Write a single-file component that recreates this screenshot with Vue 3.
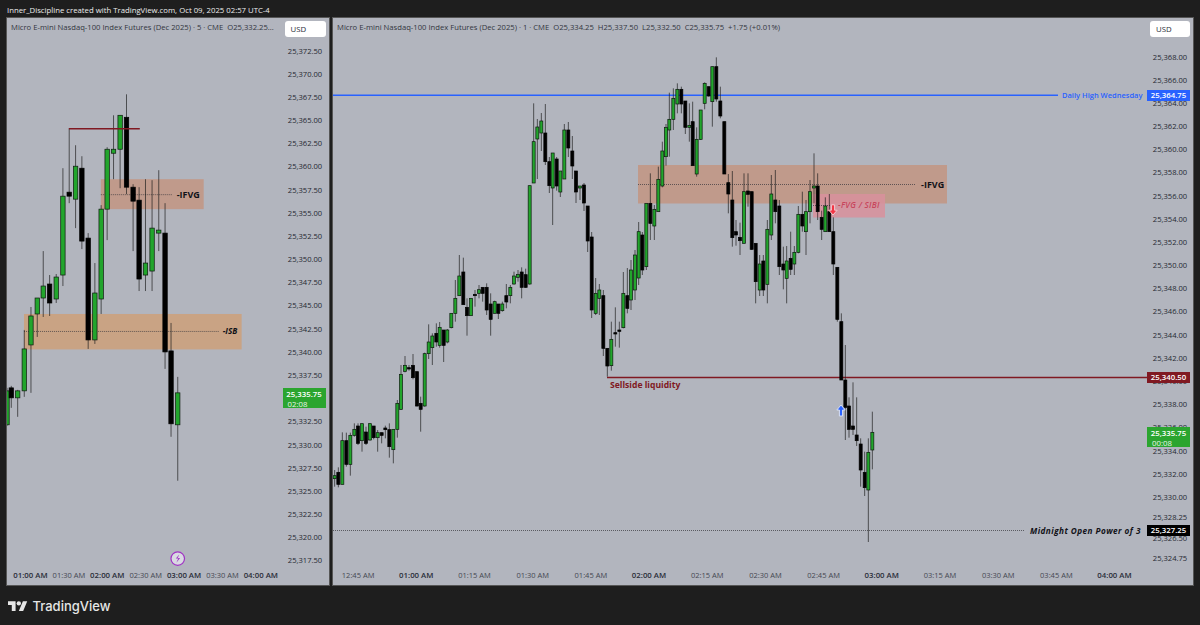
<template>
  <div class="page">
    <div class="byline">Inner_Discipline created with TradingView.com, Oct 09, 2025 02:57 UTC-4</div>

    <div class="charts">
      <!-- 5 minute chart -->
      <section class="panel panel-5m">
        <svg class="plot" viewBox="7 18 322 567" aria-hidden="true">
          <rect class="zone zone-ifvg" x="101" y="179" width="103" height="30" />
          <rect class="zone zone-isb" x="24" y="314" width="218" height="35.5" />
          <line class="dotted" x1="101" y1="194.5" x2="173" y2="194.5" />
          <line class="dotted" x1="24" y1="331.5" x2="220" y2="331.5" />
          <g v-for="(c, i) in candles5m" :key="i">
            <line class="wick" :x1="c.x" :x2="c.x" :y1="c.wt" :y2="c.wb" />
            <rect :class="c.up ? 'up' : 'down'" :x="c.x - 2.2" :y="c.bt" width="4.4" :height="c.bb - c.bt" />
          </g>
          <line class="level-red" x1="69" y1="128.5" x2="140" y2="128.5" />
          <text class="note bold big" x="177" y="197.5">-IFVG</text>
          <text class="note bold italic" x="223" y="334.5">-ISB</text>
          <circle cx="178" cy="559" r="6.8" fill="#d9dae2" stroke="#a032c4" stroke-width="1.2" />
          <path d="M179.5 554.8l-3.4 4.2h2.4l-1.9 4.2 3.8-4.9h-2.4z" fill="#a032c4" />
        </svg>

        <div class="legend">Micro E-mini Nasdaq-100 Index Futures (Dec 2025) · 5 · CME&nbsp; O25,332.25...</div>
        <div class="usd"><span>USD</span></div>
        <div class="prices prices-5m">
          <span v-for="p in prices5m" :key="p">{{ p }}</span>
        </div>
        <div class="times times-5m">
          <span v-for="t in times5m" :key="t.label" :class="{ major: t.major }">{{ t.label }}</span>
        </div>

        <div class="tag tag-live tag-live-5m"><b>25,335.75</b><span>02:08</span></div>
      </section>

      <!-- 1 minute chart -->
      <section class="panel panel-1m">
        <svg class="plot" viewBox="333 18 860 567" aria-hidden="true">
          <rect class="zone zone-ifvg" x="638" y="165" width="309" height="38.5" />
          <rect class="zone zone-fvg" x="813" y="194" width="72" height="23.5" />
          <line class="dotted" x1="638" y1="184.5" x2="916" y2="184.5" />
          <line class="dotted" x1="813" y1="205.5" x2="835" y2="205.5" />
          <line class="dotted" x1="333" y1="530.5" x2="1025" y2="530.5" />
          <line class="level-blue" x1="333" y1="95.3" x2="1058" y2="95.3" />
          <line class="level-red" x1="607" y1="377.5" x2="1147" y2="377.5" />
          <g v-for="(c, i) in candles1m" :key="i">
            <line class="wick" :x1="c.x" :x2="c.x" :y1="c.wt" :y2="c.wb" />
            <rect :class="c.up ? 'up' : 'down'" :x="c.x - 1.5" :y="c.bt" width="3" :height="c.bb - c.bt" />
          </g>
          <text class="note bold big" x="921" y="187.5">-IFVG</text>
          <text class="note italic fvg" x="838" y="208">-FVG / SIBI</text>
          <text class="note blue" x="1062" y="98">Daily High Wednesday</text>
          <text class="note red bold" x="610" y="387.5">Sellside liquidity</text>
          <text class="note bold italic wide" x="1030" y="534">Midnight Open Power of 3</text>
          <path d="M833 215l-4.2-4.8h2.6v-5.4h3.2v5.4h2.6z" fill="#f23645" stroke="#f3c9cf" stroke-width="1" />
          <path d="M841 405l4.2 5h-2.6v6h-3.2v-6h-2.6z" fill="#2962ff" stroke="#d8e0f5" stroke-width="1" />
        </svg>

        <div class="legend">Micro E-mini Nasdaq-100 Index Futures (Dec 2025) · 1 · CME&nbsp; O25,334.25&nbsp; H25,337.50&nbsp; L25,332.50&nbsp; C25,335.75&nbsp; +1.75 (+0.01%)</div>
        <div class="usd"><span>USD</span></div>
        <div class="prices prices-1m">
          <span v-for="p in prices1m" :key="p.label" :class="p.cls">{{ p.label }}</span>
        </div>
        <div class="times times-1m">
          <span v-for="t in times1m" :key="t.label" :class="{ major: t.major }">{{ t.label }}</span>
        </div>

        <div
          v-for="t in tags1m"
          :key="t.label"
          class="tag"
          :style="{ top: t.top + 'px', background: t.bg }"
        ><b>{{ t.label }}</b></div>
        <div class="tag tag-live tag-live-1m"><b>25,335.75</b><span>00:08</span></div>
      </section>
    </div>

    <div class="brand">
      <svg class="brand-logo" viewBox="0 0 36 18" aria-hidden="true">
        <path d="M14 18H7V7H0V0h14v18zM28 18h-8l7.5-18h8L28 18z" />
        <circle cx="20" cy="4" r="4" />
      </svg>
      <span>TradingView</span>
    </div>
  </div>
</template>

<script setup>
// x, body top, body bottom, wick top, wick bottom, up  (page pixels)
const raw5m = [
  [7, 391, 425, 388, 426, 1], [11.3, 388, 398, 386, 408, 0], [17.7, 391, 398, 390, 417, 1],
  [24.3, 349, 391, 330, 397, 1], [31, 316, 345, 307, 393, 1], [37.3, 298, 314, 298, 337, 1],
  [43.3, 286, 298, 251, 317, 1], [49.7, 284, 303, 275, 316, 0], [56.3, 277, 299, 274, 303, 1],
  [63, 196, 275, 168, 286, 1], [69.3, 192, 196, 128, 203, 0], [75.7, 166, 199, 145, 228, 1],
  [82, 168, 241, 156, 249, 0], [88.3, 238, 340, 233, 349, 0], [95, 293, 340, 263, 344, 1],
  [101.3, 209, 299, 205, 314, 1], [107.3, 149, 209, 147, 240, 1], [113.7, 149, 153, 115, 179, 1],
  [120.3, 115, 149, 115, 188, 1], [126.7, 117, 187, 94, 194, 0], [133.3, 187, 201, 184, 251, 0],
  [139.3, 200, 279, 187, 291, 0], [145.7, 263, 275, 179, 291, 1], [152.3, 228, 271, 180, 291, 1],
  [159, 230, 233, 170, 251, 1], [165.3, 233, 352, 203, 369, 0], [171.3, 351, 424, 323, 437, 0],
  [178, 393, 425, 377, 481, 1],
]

const toCandle = ([x, bt, bb, wt, wb, up]) => ({ x, bt, bb, wt, wb, up })
const candles5m = raw5m.map(toCandle)

// 1m candles were read off a 3x crop, so they go through a small transform
const fromCrop = (ox, oy, rows) =>
  rows.map(([zx, bt, bb, wt, wb, up]) => ({
    x: ox + zx / 3,
    bt: oy + bt / 3,
    bb: oy + bb / 3,
    wt: oy + wt / 3,
    wb: oy + wb / 3,
    up,
  }))

const candles1m = [
  ...fromCrop(330, 280, [
    [14, 587, 596, 570, 620, 1], [25, 577, 613, 562, 622, 0], [37, 482, 613, 457, 613, 1],
    [49, 482, 553, 458, 560, 0], [61, 466, 553, 458, 587, 1], [73, 448, 466, 430, 470, 1],
    [84, 438, 490, 430, 495, 0], [96, 431, 482, 431, 515, 1], [108, 456, 490, 440, 495, 0],
    [120, 431, 480, 430, 482, 1], [131, 438, 473, 438, 478, 0], [143, 458, 473, 450, 515, 1],
    [155, 458, 466, 458, 490, 0], [166, 444, 449, 437, 475, 0], [178, 449, 500, 430, 533, 0],
    [190, 448, 509, 448, 550, 1], [202, 370, 448, 360, 473, 1], [213, 283, 388, 255, 390, 1],
    [225, 256, 274, 228, 277, 1], [237, 263, 267, 255, 272, 0], [249, 256, 293, 222, 298, 0],
    [261, 275, 378, 275, 380, 0], [272, 370, 388, 350, 455, 0], [284, 221, 378, 218, 380, 1],
    [296, 186, 221, 133, 237, 1], [307, 168, 203, 160, 255, 1], [319, 160, 186, 130, 200, 0],
    [329, 142, 196, 126, 203, 1], [341, 150, 196, 150, 246, 0], [352, 150, 186, 147, 190, 1],
    [364, 100, 143, 100, 145, 1], [376, 55, 100, 0, 125, 1], [388, -12, 47, -75, 47, 1],
    [400, -24, 74, -67, 74, 0], [411, 82, 107, 55, 167, 0], [423, 55, 107, 55, 107, 1],
    [435, 43, 47, 30, 80, 0], [447, 29, 40, 15, 55, 1], [458, 22, 40, 22, 65, 0],
    [470, 22, 90, 10, 105, 0], [482, 72, 118, 40, 167, 0], [494, 65, 100, 62, 100, 1],
    [505, 72, 100, 72, 117, 0], [517, 72, 92, 65, 95, 1], [529, 47, 66, 12, 85, 0],
    [541, 22, 47, 15, 70, 1], [552, -12, 12, -25, 14, 1], [564, -17, -8, -30, 5, 1],
    [575, -24, 22, -38, 55, 0], [587, -16, 22, -34, 24, 0], [599, -283, 12, -283, 14, 1],
    [611, -415, -291, -530, -291, 1], [622, -459, -423, -483, -303, 1], [634, -477, -441, -501, -387, 1],
    [646, -441, -355, -528, -345, 0], [658, -355, -283, -369, -261, 0], [668, -381, -276, -381, -165, 1],
    [680, -363, -282, -369, -268, 0], [691, -327, -264, -327, -249, 1], [703, -450, -303, -468, -303, 1],
    [715, -450, -396, -474, -369, 0], [727, -387, -342, -432, -303, 0], [738, -327, -264, -327, -231, 0],
    [750, -282, -276, -282, -240, 1], [762, -285, -231, -291, -207, 0], [773, -222, -117, -222, -84, 0],
    [785, -129, 90, -144, 114, 0], [797, 40, 100, -6, 105, 1], [808, 30, 55, 12, 105, 1],
    [820, 47, 205, 30, 228, 0], [832, 205, 258, 205, 290, 0], [844, 178, 257, 125, 272, 1],
    [856, 158, 162, 82, 200, 0], [868, 150, 154, 125, 203, 0], [880, 40, 143, -24, 145, 1],
    [892, 47, 85, -36, 100, 0],
  ]),
  ...fromCrop(630, 50, [
    [3, 660, 750, 630, 780, 1], [15, 615, 720, 600, 750, 1], [26, 545, 684, 516, 705, 1],
    [37, 555, 660, 546, 675, 0], [49, 460, 650, 460, 660, 1], [61, 460, 520, 370, 570, 0],
    [73, 478, 528, 465, 570, 1], [85, 388, 485, 350, 485, 1], [97, 303, 408, 275, 412, 1],
    [108, 232, 320, 222, 347, 1], [118, 208, 240, 128, 320, 1], [130, 145, 208, 115, 240, 1],
    [142, 118, 162, 100, 190, 1], [154, 118, 162, 110, 190, 0], [166, 153, 232, 153, 252, 0],
    [178, 226, 232, 160, 275, 1], [188, 215, 347, 155, 347, 0], [200, 268, 372, 232, 380, 1],
    [212, 180, 268, 180, 270, 1], [224, 100, 160, 97, 178, 1], [236, 110, 138, 110, 140, 0],
    [247, 50, 155, 50, 230, 1], [259, 50, 147, 22, 155, 0], [271, 153, 198, 110, 205, 0],
    [283, 215, 372, 215, 372, 0], [295, 398, 432, 372, 490, 0], [307, 450, 563, 363, 590, 0],
  ]),
  ...fromCrop(720, 190, [
    [48, 125, 135, 90, 167, 0], [60, 142, 152, 98, 195, 0], [72, 5, 160, -50, 160, 1],
    [84, 3, 13, -50, 50, 0], [95, 5, 178, 5, 180, 0], [107, 160, 275, 160, 340, 0],
    [119, 222, 300, 195, 318, 1], [130, 213, 300, 195, 318, 0], [142, 118, 283, 90, 340, 1],
    [154, 12, 135, -45, 150, 1], [166, 30, 65, -60, 100, 0], [178, 48, 230, 30, 255, 0],
    [190, 222, 240, 170, 298, 0], [200, 213, 265, 168, 340, 1], [212, 205, 238, 125, 255, 0],
    [223, 187, 222, 168, 255, 1], [235, 73, 187, 48, 190, 1], [247, 73, 108, 5, 125, 0],
    [258, 65, 125, 30, 195, 1], [270, 5, 65, -30, 100, 1], [282, -12, -6, -110, 40, 1],
    [293, -12, 65, -50, 90, 0], [305, 82, 118, 62, 150, 0], [316, 48, 125, 22, 125, 1],
    [328, 65, 125, 12, 125, 0], [340, 125, 222, 82, 255, 0], [352, 232, 388, 232, 395, 0],
    [364, 395, 570, 370, 570, 0],
  ]),
  ...fromCrop(800, 370, [
    [136, 30, 112, -75, 210, 0], [147, 108, 178, 82, 203, 0], [159, 168, 178, 37, 195, 0],
    [170, 195, 212, 82, 228, 0], [182, 222, 300, 205, 350, 0], [194, 307, 353, 245, 378, 0],
    [205, 247, 360, 205, 516, 1], [217, 187, 240, 125, 298, 1],
  ]),
]

const label = (n) => n.toLocaleString('en-US', { minimumFractionDigits: 2 })

const prices5m = Array.from({ length: 23 }, (_, i) => label(25372.5 - i * 2.5))

const prices1m = [
  ...Array.from({ length: 20 }, (_, i) => ({ label: label(25368 - i * 2), cls: '' })),
  { label: '25,328.25', cls: 'tight first-tight' },
  { label: '25,326.50', cls: 'tight' },
  { label: '25,324.75', cls: 'tight' },
]

const times = (list) => list.map((t) => ({ label: t + ' AM', major: t.endsWith(':00') }))
const times5m = times(['01:00', '01:30', '02:00', '02:30', '03:00', '03:30', '04:00'])
const times1m = times([
  '12:45', '01:00', '01:15', '01:30', '01:45', '02:00', '02:15',
  '02:30', '02:45', '03:00', '03:15', '03:30', '03:45', '04:00',
])

const tags1m = [
  { label: '25,364.75', top: 71.5, bg: '#2962ff' },
  { label: '25,340.50', top: 353.5, bg: '#801922' },
  { label: '25,327.25', top: 506.5, bg: '#000000' },
]
</script>

<style scoped>
.page {
  width: 1200px;
  height: 625px;
  display: flex;
  flex-direction: column;
  overflow: hidden;
  background: #1e1e1e;
  font-family: "Open Sans", "Noto Sans", sans-serif;
}

.byline {
  height: 18px;
  padding-left: 7px;
  box-sizing: border-box;
  font-size: 7.75px;
  line-height: 20px;
  color: #ececec;
  white-space: nowrap;
}

.charts {
  display: flex;
  gap: 4.5px;
  padding-left: 7px;
}

.panel {
  position: relative;
  height: 567px;
  flex: none;
  display: grid;
  grid-template-rows: 20px 530px 17px;
  background: #b2b5be;
  box-shadow: 0 0 0 1px #565656;
}

.panel-5m {
  width: 321.5px;
  grid-template-columns: 1fr 47px;
}

.panel-1m {
  width: 860px;
  grid-template-columns: 1fr 46px;
}

.plot {
  position: absolute;
  inset: 0;
  width: 100%;
  height: 100%;
}

.legend {
  position: relative;
  padding: 4px 0 0 4px;
  font-size: 7.67px;
  line-height: 10px;
  color: #33363f;
  white-space: nowrap;
}

.usd {
  position: relative;
  margin: 3px 3px 0 3px;
  height: 16px;
  box-sizing: border-box;
  padding-left: 6px;
  background: #ffffff;
  border-radius: 3px;
  font-size: 7.8px;
  line-height: 16px;
  color: #2a2e39;
}

.prices {
  position: relative;
  grid-column: 2;
  grid-row: 2 / 4;
  display: flex;
  flex-direction: column;
  align-items: center;
  font-size: 7.6px;
  color: #262932;
}

.prices span {
  flex: none;
  height: 23.18px;
  line-height: 23.18px;
}

.prices-5m {
  padding-top: 1.6px;
}

.prices-1m {
  padding-top: 7.6px;
}

.prices-1m .tight {
  height: 20.4px;
  line-height: 20.4px;
}

.prices-1m .first-tight {
  margin-top: -1.6px;
}

.times {
  position: relative;
  grid-column: 1;
  grid-row: 3;
  display: grid;
  grid-auto-flow: column;
  justify-content: start;
  font-size: 7.5px;
  line-height: 15px;
  text-align: center;
  color: #454852;
  white-space: nowrap;
}

.times .major {
  font-size: 7.8px;
  font-weight: 600;
  color: #2a2e39;
}

.times-5m {
  grid-auto-columns: 38.4px;
  padding-left: 4.3px;
}

.times-1m {
  grid-auto-columns: 58.2px;
  margin-left: -4px;
}

.tag {
  position: absolute;
  right: 3px;
  width: 43px;
  height: 11.5px;
  font-size: 7.8px;
  line-height: 11.5px;
  text-align: center;
  color: #ffffff;
}

.tag b {
  font-weight: 600;
}

.tag-live {
  height: 20px;
  background: #2ba52f;
  line-height: 10px;
  padding-top: 1px;
  box-sizing: border-box;
}

.tag-live span {
  display: block;
  text-align: left;
  padding-left: 5px;
  color: #e8f5e8;
}

.tag-live-5m {
  top: 370px;
}

.tag-live-1m {
  top: 409px;
}

.wick {
  stroke: #1c1c1c;
  stroke-width: 0.9;
  opacity: 0.75;
}

.up {
  fill: #22a52c;
  stroke: #0d1a0e;
  stroke-width: 0.7;
}

.down {
  fill: #000000;
  stroke: #000000;
  stroke-width: 0.7;
}

.zone-ifvg {
  fill: #c09a8b;
}

.zone-isb {
  fill: #c9a384;
}

.zone-fvg {
  fill: #d8909c;
  opacity: 0.85;
}

.dotted {
  stroke: #34343a;
  stroke-width: 0.7;
  stroke-dasharray: 1 1;
}

.level-blue {
  stroke: #2962ff;
  stroke-width: 1.6;
}

.level-red {
  stroke: #801922;
  stroke-width: 1.3;
}

.note {
  font-size: 8.2px;
  fill: #111218;
}

.big {
  font-size: 9px;
}

.bold {
  font-weight: 700;
}

.italic {
  font-style: italic;
}

.wide {
  letter-spacing: 0.45px;
}

.blue {
  fill: #2962ff;
  font-size: 7.5px;
  font-weight: 600;
}

.red {
  fill: #801922;
  font-size: 8.6px;
}

.fvg {
  fill: #c8465c;
  font-weight: 600;
  letter-spacing: 0.3px;
}

.brand {
  display: flex;
  align-items: center;
  gap: 5px;
  padding: 14px 0 0 8px;
  color: #e6e6e6;
  font-family: Inter, Lato, sans-serif;
  font-size: 13px;
  font-weight: 500;
  line-height: 14px;
}

.brand-logo {
  width: 19.5px;
  height: 10px;
  fill: #e6e6e6;
}
</style>
